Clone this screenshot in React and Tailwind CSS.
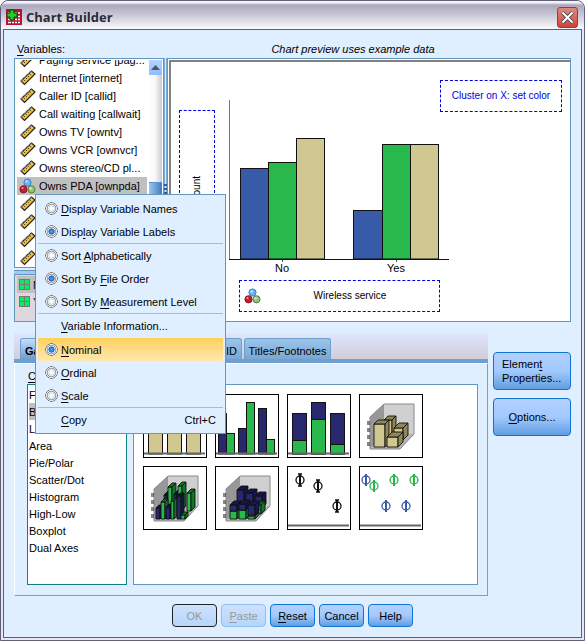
import { useState } from "react";

const variables = [
  "Paging service [pag...",
  "Internet [internet]",
  "Caller ID [callid]",
  "Call waiting [callwait]",
  "Owns TV [owntv]",
  "Owns VCR [ownvcr]",
  "Owns stereo/CD pl...",
  "Owns PDA [ownpda]",
  "Owns computer",
  "Owns fax [ownfax]",
  "News [news]",
  "Response",
];

const chartTypes = ["Favorites", "Bar", "Line", "Area", "Pie/Polar", "Scatter/Dot", "Histogram", "High-Low", "Boxplot", "Dual Axes"];

const NAVY = "#28286e";
const GREEN = "#29b84c";
const TAN = "#d0c890";
const BLUE = "#385ba8";

// "&" marks the letter that is underlined
function Mnemonic({ text }) {
  const i = text.indexOf("&");
  if (i < 0) return <span>{text}</span>;
  return (
    <span>
      {text.slice(0, i)}
      <u className="underline-offset-2">{text[i + 1]}</u>
      {text.slice(i + 2)}
    </span>
  );
}

function RulerIcon() {
  return (
    <svg width="16" height="16" viewBox="0 0 16 16" className="shrink-0">
      <path d="M1 11 11.5 1 15 4 4.5 14.5z" fill="#fbc02d" stroke="#222" strokeWidth="1.2" />
      <path d="M3.500 9.500l1.500 1.500M5.500 7.500l1.500 1.500M7.500 5.700l1.500 1.500M9.500 3.800l1.500 1.500" stroke="#5a4300" strokeWidth="1" />
      <path d="M1 11 11.500 1" stroke="#888" strokeWidth="1.500" strokeDasharray="1 1" />
    </svg>
  );
}

function NominalIcon() {
  return (
    <svg width="17" height="16" viewBox="0 0 17 16" className="shrink-0">
      <circle cx="8.5" cy="4.5" r="3.6" fill="#6db4f2" stroke="#3b7fc9" />
      <circle cx="4.5" cy="11.3" r="3.6" fill="#c41e35" stroke="#8e1226" />
      <circle cx="12.5" cy="11.3" r="3.6" fill="#96c078" stroke="#57843e" />
      <circle cx="7.6" cy="3.4" r="1.2" fill="#c4e2ff" />
      <circle cx="3.5" cy="10.1" r="1" fill="#f0a0a8" />
      <circle cx="11.6" cy="10.2" r="1.2" fill="#d6ecc6" />
    </svg>
  );
}

function CategoryIcon() {
  return (
    <svg width="11" height="11" viewBox="0 0 11 11" className="shrink-0">
      <rect width="11" height="11" fill="#777" />
      <path d="M1 1h4v4H1zM6 1h4v4H6zM1 6h4v4H1zM6 6h4v4H6z" fill="#00f060" />
    </svg>
  );
}

function AppIcon() {
  return (
    <svg width="16" height="16" viewBox="0 0 16 16" className="shrink-0">
      <rect width="16" height="16" fill="#b3123a" />
      <path d="M2 4h12M2 7.500h12M2 10.500h12M2 13.500h12" stroke="#fff" strokeWidth="1.5" />
      <path d="M5.500 2v13M8.500 2v13M11.500 2v13" stroke="#b3123a" />
      <path d="M4 1h4v3h3v4H8v3H4V8H1V4h3z" fill="#1fd01f" stroke="#064a06" />
    </svg>
  );
}

function Bar({ x, y, w, bottom = 59, fill }) {
  return <rect x={x} y={y} width={w} height={bottom - y} fill={fill} stroke="#111" />;
}

function Block({ x, y, w, h, d = 4, front, side, top = side }) {
  return (
    <g stroke="#111" strokeWidth="0.9" strokeLinejoin="round">
      <path d={`M${x} ${y}h${w}v${h}h${-w}z`} fill={front} />
      <path d={`M${x} ${y}l${d} ${-d}h${w}l${-d} ${d}z`} fill={top} />
      <path d={`M${x + w} ${y}l${d} ${-d}v${h}l${-d} ${d}z`} fill={side} />
    </g>
  );
}

function Room({ children }) {
  return (
    <>
      <path d="M10 22 24 9v31L10 54z" fill="#989898" />
      <path d="M24 9h30v30H24z" fill="#d0d0d0" />
      <path d="M24 39h30L40 54H10z" fill="#b4b4b4" />
      <path d="M10 54V22L24 9h30v30L40 54z" fill="none" stroke="#8a8a8a" />
      <path d="M7 27h3M7 29h3M7 34h3M7 36h3M7 41h3M7 43h3M7 48h3M7 50h3" stroke="#111" />
      {children}
    </>
  );
}

function Whisker({ x, y, color, caps }) {
  return (
    <g stroke={color} strokeWidth="1.300" fill="none">
      <ellipse cx={x} cy={y} rx="4" ry="4" />
      <path d={`M${x} ${y - 6}v12`} strokeWidth="2" />
      {caps && <path d={`M${x - 2} ${y - 6}h4M${x - 2} ${y + 6}h4`} />}
    </g>
  );
}

const Base = () => <path d="M0 58.500h61" stroke="#666" strokeWidth="2" />;

const thumbs = [
  {
    name: "Simple Bar",
    art: (
      <>
        <Bar x={4.5} y={22.5} w={14} fill={TAN} />
        <Bar x={23.5} y={10.5} w={14} fill={TAN} />
        <Bar x={42.5} y={30.5} w={14} fill={TAN} />
        <Base />
      </>
    ),
  },
  {
    name: "Clustered Bar",
    art: (
      <>
        <Bar x={2.5} y={18.5} w={8} fill={NAVY} />
        <Bar x={10.5} y={38.5} w={8} fill={GREEN} />
        <Bar x={22.5} y={33.5} w={8} fill={NAVY} />
        <Bar x={30.5} y={7.5} w={8} fill={GREEN} />
        <Bar x={42.5} y={13.5} w={8} fill={NAVY} />
        <Bar x={50.5} y={44.5} w={8} fill={GREEN} />
        <Base />
      </>
    ),
  },
  {
    name: "Stacked Bar",
    art: (
      <>
        <Bar x={4.5} y={18.5} w={14} fill={NAVY} />
        <Bar x={4.5} y={45.5} w={14} fill={GREEN} />
        <Bar x={23.5} y={7.5} w={14} fill={NAVY} />
        <Bar x={23.5} y={24.5} w={14} fill={GREEN} />
        <Bar x={42.5} y={18.5} w={14} fill={NAVY} />
        <Bar x={42.5} y={49.5} w={14} fill={GREEN} />
        <Base />
      </>
    ),
  },
  {
    name: "Simple 3-D Bar",
    art: (
      <Room>
        <Block x={24} y={25} w={8} h={22} front={TAN} side="#8f8756" />
        <Block x={34} y={33} w={9} h={12} d={5} front={TAN} side="#8f8756" />
        <Block x={14} y={29} w={11} h={23} front={TAN} side="#8f8756" />
        <Block x={27} y={42} w={11} h={10} d={5} front={TAN} side="#8f8756" />
      </Room>
    ),
  },
  {
    name: "Clustered 3-D Bar",
    art: (
      <Room>
        <Block x={20} y={28} w={3} h={18} front={NAVY} side="#17174a" />
        <Block x={24} y={20} w={4} h={26} front={GREEN} side="#14742c" />
        <Block x={30} y={27} w={3} h={16} front={NAVY} side="#17174a" />
        <Block x={34} y={19} w={4} h={24} front={GREEN} side="#14742c" />
        <Block x={43} y={26} w={4} h={18} front={GREEN} side="#14742c" />
        <Block x={12} y={41} w={4} h={11} d={3} front={NAVY} side="#17174a" />
        <Block x={17} y={35} w={4} h={17} d={3} front={GREEN} side="#14742c" />
        <Block x={22} y={40} w={4} h={12} d={3} front={NAVY} side="#17174a" />
        <Block x={27} y={34} w={3} h={18} d={3} front={GREEN} side="#14742c" />
        <Block x={33} y={29} w={4} h={23} d={3} front={NAVY} side="#17174a" />
        <Block x={37} y={48} w={4} h={4} d={3} front={GREEN} side="#14742c" />
      </Room>
    ),
  },
  {
    name: "Stacked 3-D Bar",
    art: (
      <Room>
        <Block x={21} y={23} w={7} h={16} front={NAVY} side="#17174a" />
        <Block x={30} y={26} w={7} h={14} front={NAVY} side="#17174a" />
        <Block x={39} y={29} w={7} h={12} front={NAVY} side="#17174a" />
        <Block x={42} y={38} w={3} h={9} front={GREEN} side="#14742c" />
        <Block x={14} y={44} w={7} h={8} front={GREEN} side="#14742c" />
        <Block x={14} y={38} w={7} h={6} front={NAVY} side="#17174a" />
        <Block x={23} y={43} w={7} h={9} front={GREEN} side="#14742c" />
        <Block x={23} y={37} w={7} h={6} front={NAVY} side="#17174a" />
        <Block x={32} y={49} w={7} h={3} front={GREEN} side="#14742c" />
        <Block x={32} y={38} w={7} h={10} front={NAVY} side="#17174a" />
      </Room>
    ),
  },
  {
    name: "Simple Error Bar",
    art: (
      <>
        <Whisker x={12} y={13} color="#111" caps />
        <Whisker x={30} y={19} color="#111" caps />
        <Whisker x={49} y={39} color="#111" caps />
        <Base />
      </>
    ),
  },
  {
    name: "Clustered Error Bar",
    art: (
      <>
        <Whisker x={6} y={13} color={BLUE} />
        <Whisker x={14} y={19} color={GREEN} />
        <Whisker x={34} y={13} color={GREEN} />
        <Whisker x={54} y={13} color={GREEN} />
        <Whisker x={26} y={39} color={BLUE} />
        <Whisker x={46} y={39} color={BLUE} />
        <Base />
      </>
    ),
  },
];

function PreviewChart() {
  return (
    <svg width="221" height="175" viewBox="0 0 221 175" className="block max-w-none">
      <path d="M0.500 0v159" stroke="#777" />
      <Bar x={11.5} y={68.5} w={28} bottom={159} fill={BLUE} />
      <Bar x={39.5} y={62.5} w={28} bottom={159} fill={GREEN} />
      <Bar x={67.5} y={38.5} w={28} bottom={159} fill={TAN} />
      <Bar x={124.5} y={110.5} w={29} bottom={159} fill={BLUE} />
      <Bar x={153.5} y={44.5} w={28} bottom={159} fill={GREEN} />
      <Bar x={181.500} y={44.5} w={28} bottom={159} fill={TAN} />
      <path d="M0 159.500h220" stroke="#111" />
      <path d="M53.500 160v2M167.500 160v2" stroke="#555" />
      <g fontSize="11" textAnchor="middle" fill="#000">
        <text x="53" y="172">No</text>
        <text x="167" y="172">Yes</text>
      </g>
    </svg>
  );
}

function MenuRadio({ name, value, text, current, onPick }) {
  const on = current === value;
  return (
    <label
      className={`flex h-[23px] items-center gap-[3px] pl-[7px] ${name === "level" && on ? "bg-linear-to-b from-[#ffd058] to-[#ffe7ae]" : ""}`}
    >
      <input
        type="radio"
        name={name}
        checked={on}
        onChange={() => onPick(value)}
        className="m-0 size-[13px] shrink-0 appearance-none rounded-full bg-[radial-gradient(closest-side,#fff_28%,#a8ccf0_42%,#fff_52%,#8a8a8a_66%,#eee_78%,#666_92%,transparent_100%)] checked:bg-[radial-gradient(closest-side,#5aa5ee_0%,#1c66bd_42%,#fff_54%,#8a8a8a_66%,#eee_78%,#666_92%,transparent_100%)]"
      />
      <Mnemonic text={text} />
    </label>
  );
}

const Separator = () => <hr className="h-px border-0 bg-[#b8b8b8]" />;

function ContextMenu() {
  const [display, setDisplay] = useState("labels");
  const [sort, setSort] = useState("file");
  const [level, setLevel] = useState("nominal");

  return (
    <div className="absolute top-[193px] left-[34px] z-10 w-[191px] border border-[#6496be] bg-[#dfefff] p-0.5">
      <MenuRadio name="display" value="names" text="&Display Variable Names" current={display} onPick={setDisplay} />
      <MenuRadio name="display" value="labels" text="Disp&lay Variable Labels" current={display} onPick={setDisplay} />
      <Separator />
      <MenuRadio name="sort" value="alpha" text="Sort &Alphabetically" current={sort} onPick={setSort} />
      <MenuRadio name="sort" value="file" text="Sort By &File Order" current={sort} onPick={setSort} />
      <MenuRadio name="sort" value="measure" text="Sort By &Measurement Level" current={sort} onPick={setSort} />
      <Separator />
      <button className="mb-px flex h-[23px] w-full items-center pl-[23px]">
        <Mnemonic text="&Variable Information..." />
      </button>
      <MenuRadio name="level" value="nominal" text="&Nominal" current={level} onPick={setLevel} />
      <MenuRadio name="level" value="ordinal" text="&Ordinal" current={level} onPick={setLevel} />
      <MenuRadio name="level" value="scale" text="&Scale" current={level} onPick={setLevel} />
      <Separator />
      <button className="flex h-[23px] w-full items-center justify-between pr-[7px] pl-[23px]">
        <Mnemonic text="&Copy" />
        <span>Ctrl+C</span>
      </button>
    </div>
  );
}

function VariableList() {
  return (
    <div className="flex h-[210px] border border-[#6496be] bg-white p-px">
      <div className="min-w-0 flex-1 overflow-hidden pl-px">
        <ul className="-mt-[9px]">
          {variables.map((v) => {
            const selected = v.startsWith("Owns PDA");
            return (
              <li key={v} className={`flex h-[18px] items-center gap-[3px] whitespace-nowrap ${selected ? "bg-[#c0c0c0] pl-0.5" : "pl-[3px]"}`}>
                {selected ? <NominalIcon /> : <RulerIcon />}
                {v}
              </li>
            );
          })}
        </ul>
      </div>
      <div className="ml-0.5 flex w-[13px] flex-col bg-linear-to-r from-white via-[#f6f6f8] to-[#c9c9d0]">
        <button aria-label="Scroll up" className="flex h-[15px] items-center justify-center bg-linear-to-b from-[#b4d2ff] to-[#8ebeff]">
          <svg width="9" height="5" viewBox="0 0 9 5">
            <path d="M0 5 4.500 0 9 5z" fill="#555" />
          </svg>
        </button>
        <div className="mt-[107px] flex-1 border-t border-[#4d94d8] bg-linear-to-r from-[#9cc6f4] to-[#3f7dbb]" />
      </div>
    </div>
  );
}

function DialogButton({ text, disabled, isDefault, className = "" }) {
  let tone = "border-[#0f74d1] from-[#b4d0ff] via-[#a2c9ff] to-[#619ee0]";
  if (disabled) tone = "border-[#8fc0f0] from-[#cfe0ff] to-[#b4d6fa] text-[#999]";
  if (isDefault) tone = "border-[#222] from-[#cfe0ff] to-[#b4d6fa] text-[#999]";
  return (
    <button disabled={disabled} className={`rounded-[4px] border bg-linear-to-b ${tone} ${className}`}>
      <Mnemonic text={text} />
    </button>
  );
}

function Tab({ children, active, className = "" }) {
  return (
    <button
      role="tab"
      aria-selected={active}
      className={`h-[21px] rounded-t-[3px] border border-b-0 border-[#6d9fcf] pt-1 whitespace-nowrap ${active ? "bg-linear-to-b from-[#c4defa] to-[#6f9fcf] font-bold" : "bg-linear-to-b from-[#9cc4e8] to-[#78a8d4]"} ${className}`}
    >
      {children}
    </button>
  );
}

export default function App() {
  const [type, setType] = useState("Bar");

  return (
    <div className="relative flex min-h-screen flex-col rounded-t-lg border border-[#5f5f7a] bg-[#e6e6f0] px-0.5 pb-0.5 font-['Liberation_Sans',Arial,sans-serif] text-[11px] leading-[14px] text-black select-none">
      <header className="-mx-0.5 flex h-[28px] items-center rounded-t-lg bg-linear-to-b from-[#f4f4f8] from-5% via-[#aaa7bd] via-15% to-[#fafafc] pt-1 pr-1.5 pl-[5px]">
        <AppIcon />
        <h1 className="ml-1 flex-1 font-['Open_Sans',sans-serif] text-[13px] font-bold text-[#2b2b36]">Chart Builder</h1>
        <button aria-label="Close" className="flex size-[21px] items-center justify-center rounded-[3px] border border-[#a83434] bg-linear-to-b from-[#d98a80] to-[#d0403c]">
          <svg width="13" height="13" viewBox="0 0 13 13">
            <path d="M1.500 1.500l10 10M11.500 1.500l-10 10" stroke="#333" strokeWidth="3.500" />
            <path d="M1.500 1.500l10 10M11.500 1.500l-10 10" stroke="#fff" strokeWidth="2.200" />
          </svg>
        </button>
      </header>

      <main className="flex flex-1 flex-col border border-[#5f5f7a] bg-[#dfefff] px-2.5 pt-3 pb-2.5">
        <div className="mb-0.5 flex gap-[3px]">
          <div className="w-[150px] pl-[3px]">
            <Mnemonic text="&Variables:" />
          </div>
          <div className="flex-1 pr-8 text-center italic">Chart preview uses example data</div>
        </div>

        <div className="flex">
          <div className="flex w-[150px] shrink-0 flex-col">
            <VariableList />
            <div className="mt-0.5 h-1 border-t border-[#6496be] bg-[#9ccaff]" />
            <ul className="h-12 border border-[#6496be] bg-[#dfd7df] p-px pl-0.5">
              <li className="flex h-[17px] items-center gap-[3px] bg-[#c0c0c0] pl-0.5"><CategoryIcon />No</li>
              <li className="flex h-[17px] items-center gap-[3px] pl-0.5"><CategoryIcon />Yes</li>
            </ul>
          </div>

          <div className="flex w-[3px] shrink-0 flex-col items-center justify-center border-x border-[#7fb0da] bg-[#c4f0ff]">
            <svg width="3" height="12" viewBox="0 0 3 12" className="block max-w-none">
              <path d="M0 1h3M0 5h3M0 9h3" stroke="#2b5fa0" strokeWidth="2" />
            </svg>
          </div>

          <section className="min-w-0 flex-1 border border-[#6496be] bg-white pt-px pl-px">
            <div className="flex h-full items-start border-t-2 border-l-2 border-[#858080] pr-2 pl-2">
              <div className="mt-12 flex h-[158px] w-9 shrink-0 items-center justify-center border border-dashed border-[#0000e0]">
                <span className="rotate-180 text-[10px] [writing-mode:vertical-rl]">Count</span>
              </div>
              <div className="mt-[38px] ml-[14px] w-[211px] shrink-0">
                <PreviewChart />
                <div className="mt-[5px] ml-2.5 flex h-8 items-center border border-dashed border-[#0000e0] pl-1">
                  <NominalIcon />
                  <span className="flex-1 text-center text-[10px]">Wireless service</span>
                </div>
              </div>
              <div className="mt-[18px] ml-auto flex h-8 w-[122px] shrink-0 items-center justify-center border border-dashed border-[#0000e0] text-[10px] whitespace-nowrap text-[#0000e0]">
                Cluster on X: set color
              </div>
            </div>
          </section>
        </div>

        <div className="mt-[11px] flex flex-1 gap-[5px]">
          <div className="flex flex-1 flex-col">
            <div role="tablist" className="flex h-[26px] items-end gap-0.5 bg-linear-to-b from-[#dfe6ff] to-[#cfcdd8] pl-1.5">
              <Tab active className="w-[49px] pl-1 text-left">Gallery</Tab>
              <Tab className="w-[79px]">Basic Elements</Tab>
              <Tab className="w-[90px] pr-1 text-right">Groups/Point ID</Tab>
              <Tab className="w-[87px]">Titles/Footnotes</Tab>
            </div>
            <div className="h-1 bg-[#6f9fcf]" />
            <div className="flex flex-1 flex-col border border-t-white border-r-[#999] border-b-[#999] border-l-white pt-[5px] pr-[9px] pb-2.5 pl-3">
              <div className="pl-px">
                <Mnemonic text="&Choose from:" />
              </div>
              <div className="mt-px flex flex-1 gap-1.5">
                <ul className="w-[100px] border border-[#108080] bg-white px-px pt-px">
                  {chartTypes.map((t) => (
                    <li key={t}>
                      <button
                        onClick={() => setType(t)}
                        className={`block h-[17px] w-full text-left ${t === type ? "bg-[#c0c0c0]" : ""}`}
                      >
                        {t}
                      </button>
                    </li>
                  ))}
                </ul>
                <div className="grid flex-1 auto-rows-max grid-cols-[repeat(4,64px)] content-start gap-2 border border-[#6496be] bg-white p-[9px]">
                  {thumbs.map((t) => (
                    <button key={t.name} aria-label={t.name} className="size-16 border border-black bg-white">
                      <svg width="62" height="62" viewBox="0 0 62 62" className="block">
                        {t.art}
                      </svg>
                    </button>
                  ))}
                </div>
              </div>
            </div>
          </div>

          <div className="flex w-[78px] flex-col gap-2 pt-[19px]">
            <DialogButton text="Elemen&t Properties..." className="h-[38px] px-2 text-left" />
            <DialogButton text="&Options..." className="h-[38px]" />
          </div>
        </div>

        <footer className="mt-2 flex justify-center gap-1">
          <DialogButton text="OK" disabled isDefault className="h-[23px] w-[45px]" />
          <DialogButton text="&Paste" disabled className="h-[23px] w-[45px]" />
          <DialogButton text="&Reset" className="h-[23px] w-[45px]" />
          <DialogButton text="Cancel" className="h-[23px] w-[45px]" />
          <DialogButton text="Help" className="h-[23px] w-[45px]" />
        </footer>
      </main>

      <ContextMenu />
    </div>
  );
}
